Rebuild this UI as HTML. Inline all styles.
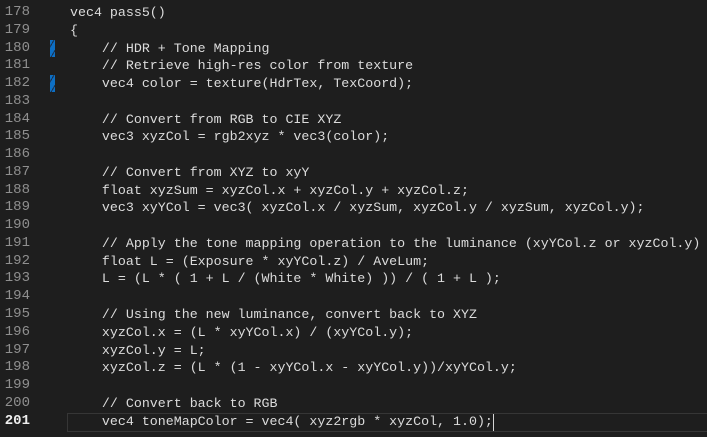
<!DOCTYPE html>
<html><head><meta charset="utf-8"><style>
html,body{margin:0;padding:0;background:#1e1e1e;width:707px;height:437px;overflow:hidden}
.wrap{position:relative;width:707px;height:437px;font-family:"Liberation Mono",monospace;font-size:13.3px;color:#dcdcdc}
.ln{position:absolute;left:0;width:30px;text-align:right;color:#8f8f8f;white-space:pre;font-size:14px}
.code{position:absolute;left:70px;white-space:pre}
.l{height:17.78px;line-height:17.78px}
.hl{position:absolute;left:67px;top:413px;width:645px;height:17px;border:1px solid #363636}
.mk{position:absolute;left:50px;width:5px;height:17px;background:repeating-linear-gradient(120deg,#0d6fc4 0 3px,#1b2f4a 3px 4px,#0d6fc4 4px 6px)}
.cur{position:absolute;left:493px;top:414px;width:1px;height:17px;background:#d4d4d4}
</style></head><body><div class="wrap">
<div class="hl"></div>
<div class="mk" style="top:40px"></div>
<div class="mk" style="top:75px"></div>
<div class="ln" style="top:4px"><div class="l">178</div><div class="l">179</div><div class="l">180</div><div class="l">181</div><div class="l">182</div><div class="l">183</div><div class="l">184</div><div class="l">185</div><div class="l">186</div><div class="l">187</div><div class="l">188</div><div class="l">189</div><div class="l">190</div><div class="l">191</div><div class="l">192</div><div class="l">193</div><div class="l">194</div><div class="l">195</div><div class="l">196</div><div class="l">197</div><div class="l">198</div><div class="l">199</div><div class="l">200</div><div class="l" style="color:#eeeeee;font-weight:bold">201</div></div>
<div class="code" style="top:4px"><div class="l">vec4 pass5()</div><div class="l">{</div><div class="l">    // HDR + Tone Mapping</div><div class="l">    // Retrieve high-res color from texture</div><div class="l">    vec4 color = texture(HdrTex, TexCoord);</div><div class="l"> </div><div class="l">    // Convert from RGB to CIE XYZ</div><div class="l">    vec3 xyzCol = rgb2xyz * vec3(color);</div><div class="l"> </div><div class="l">    // Convert from XYZ to xyY</div><div class="l">    float xyzSum = xyzCol.x + xyzCol.y + xyzCol.z;</div><div class="l">    vec3 xyYCol = vec3( xyzCol.x / xyzSum, xyzCol.y / xyzSum, xyzCol.y);</div><div class="l"> </div><div class="l">    // Apply the tone mapping operation to the luminance (xyYCol.z or xyzCol.y)</div><div class="l">    float L = (Exposure * xyYCol.z) / AveLum;</div><div class="l">    L = (L * ( 1 + L / (White * White) )) / ( 1 + L );</div><div class="l"> </div><div class="l">    // Using the new luminance, convert back to XYZ</div><div class="l">    xyzCol.x = (L * xyYCol.x) / (xyYCol.y);</div><div class="l">    xyzCol.y = L;</div><div class="l">    xyzCol.z = (L * (1 - xyYCol.x - xyYCol.y))/xyYCol.y;</div><div class="l"> </div><div class="l">    // Convert back to RGB</div><div class="l">    vec4 toneMapColor = vec4( xyz2rgb * xyzCol, 1.0);</div></div>
<div class="cur"></div>
</div></body></html>
